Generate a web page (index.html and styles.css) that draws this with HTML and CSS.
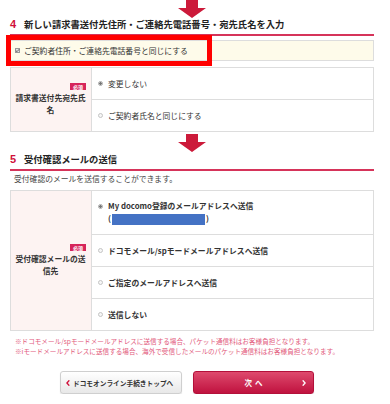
FILE: index.html
```html
<!DOCTYPE html>
<html lang="ja">
<head>
<meta charset="utf-8">
<title>お手続き</title>
<link rel="stylesheet" href="styles.css">
</head>
<body>
<div class="page">
  <div class="arrow"><svg width="28" height="18" viewBox="0 0 28 18"><path d="M8 0h12v8h8L14 18 0 8h8z" fill="#cc1a3a"/></svg></div>
  <h2 class="step"><span class="num">4</span>新しい請求書送付先住所・ご連絡先電話番号・宛先氏名を入力</h2>
  <div class="same-box">
    <span class="check"><svg width="5" height="5" viewBox="0 0 5 5"><path d="M0.8 2.5 2 3.7 4.2 1.2" fill="none" stroke="#555" stroke-width="0.9"/></svg></span>ご契約者住所・ご連絡先電話番号と同じにする
    <span class="highlight"></span>
  </div>
  <div class="form-table">
    <div class="label-cell"><span class="badge">必須</span><span class="label">請求書送付先宛先氏名</span></div>
    <div class="options">
      <div class="opt"><span class="radio on"></span><span>変更しない</span></div>
      <div class="opt"><span class="radio"></span><span>ご契約者氏名と同じにする</span></div>
    </div>
  </div>

  <div class="arrow arrow-2"><svg width="28" height="18" viewBox="0 0 28 18"><path d="M8 0h12v8h8L14 18 0 8h8z" fill="#cc1a3a"/></svg></div>
  <h2 class="step step-5"><span class="num">5</span>受付確認メールの送信</h2>
  <p class="desc">受付確認のメールを送信することができます。</p>
  <div class="form-table table-2">
    <div class="label-cell"><span class="badge">必須</span><span class="label">受付確認メールの送信先</span></div>
    <div class="options bold">
      <div class="opt opt-tall"><span class="radio on"></span><div class="opt-body"><div>My docomo登録のメールアドレスへ送信</div><div>(<span class="mask"></span>)</div></div></div>
      <div class="opt"><span class="radio"></span><span>ドコモメール/spモードメールアドレスへ送信</span></div>
      <div class="opt"><span class="radio"></span><span>ご指定のメールアドレスへ送信</span></div>
      <div class="opt"><span class="radio"></span><span>送信しない</span></div>
    </div>
  </div>
  <div class="notes">
    <p>※ドコモメール/spモードメールアドレスに送信する場合、パケット通信料はお客様負担となります。</p>
    <p>※iモードメールアドレスに送信する場合、海外で受信したメールのパケット通信料はお客様負担となります。</p>
  </div>
  <div class="btns">
    <a class="btn btn-back"><svg class="chev" width="4" height="6" viewBox="0 0 4 6"><path d="M3.3 0.4 0.9 3l2.4 2.6" fill="none" stroke="#d0103a" stroke-width="1.4"/></svg>ドコモオンライン手続きトップへ</a>
    <a class="btn btn-next"><span></span><span class="next-text">次へ</span><svg class="chev-r" width="4" height="6" viewBox="0 0 4 6"><path d="M0.7 0.4 3.1 3 0.7 5.6" fill="none" stroke="#fff" stroke-width="1.4"/></svg></a>
  </div>
</div>
</body>
</html>
```
FILE: styles.css
```css
* { box-sizing: border-box; }
html, body { margin: 0; background: #fff; }
body {
  font-family: "Noto Sans CJK JP", "Noto Sans", sans-serif;
  color: #333;
  overflow: hidden;
}
p { margin: 0; }
.page {
  width: 390px;
  padding: 0 16px 0 10px;
}
.arrow {
  display: flex;
  justify-content: center;
  height: 18px;
}
.arrow svg { display: block; }
.arrow-2 { margin-top: 2px; }
.step {
  margin: 0;
  display: flex;
  align-items: center;
  font-size: 9.3px;
  font-weight: bold;
  line-height: 12px;
  padding-bottom: 4px;
  border-bottom: 2px solid #d6345a;
  color: #222;
}
.step-5 { margin-top: 1px; }
.num {
  width: 14px;
  color: #d0103a;
  font-family: "Liberation Sans", Arial, sans-serif;
  font-size: 11px;
}
.same-box {
  position: relative;
  margin-top: 4px;
  height: 21px;
  border: 1px solid #ddd;
  background: #fefbea;
  display: flex;
  align-items: center;
  padding-left: 4px;
  font-size: 7.8px;
}
.check {
  width: 5px;
  height: 5px;
  border: 1px solid #999;
  background: #e4e4e4;
  margin-right: 4px;
  flex: none;
  display: flex;
  align-items: center;
  justify-content: center;
}
.check svg { display: block; flex: none; }
.highlight {
  position: absolute;
  left: -5px;
  top: -6px;
  width: 206px;
  height: 31px;
  border: 5px solid #ff0000;
}
.form-table {
  margin-top: 6px;
  display: flex;
  border: 1px solid #ddd;
}
.label-cell {
  width: 81px;
  flex: none;
  background: #fdf3f2;
  border-right: 1px solid #ddd;
  display: flex;
  flex-direction: column;
  justify-content: center;
  padding: 0 4px 0 3px;
}
.badge {
  align-self: flex-end;
  background: #d6245a;
  color: #fff;
  font-size: 5px;
  line-height: 7px;
  padding: 0 3px;
  margin-bottom: 2px;
  margin-right: 1px;
  font-weight: bold;
}
.label {
  font-size: 7.8px;
  font-weight: bold;
  text-align: center;
  line-height: 12px;
}
.options { flex: 1; }
.options.bold { font-weight: bold; }
.opt {
  height: 31px;
  display: flex;
  align-items: center;
  padding-left: 6px;
  font-size: 7.8px;
}
.opt + .opt {
  height: 32px;
  border-top: 1px solid #ddd;
}
.opt-tall { height: 43px; }
.opt-tall .radio { align-self: flex-start; margin-top: 13px; }
.opt-body { line-height: 12px; }
.radio {
  width: 5px;
  height: 5px;
  border-radius: 50%;
  border: 1px solid #c4c4c4;
  background: #f6f6f6;
  margin-right: 5px;
  flex: none;
}
.radio.on {
  border-color: #aaa;
  background: radial-gradient(circle, #777 0 1.1px, #e6e6e6 1.5px);
}
.mask {
  display: inline-block;
  width: 93px;
  height: 11px;
  background: #4472c4;
  vertical-align: middle;
  margin: 0 1px;
}
.desc {
  margin-top: 3px;
  padding-left: 4px;
  font-size: 7.8px;
  line-height: 10px;
  color: #444;
}
.table-2 { margin-top: 6px; }
.notes {
  margin-top: 5px;
  padding-left: 5px;
  font-size: 6.6px;
  line-height: 10px;
  color: #e25a7c;
}
.btns {
  margin-top: 15px;
  display: flex;
  gap: 11px;
  padding-left: 50px;
}
.btn {
  height: 23px;
  border-radius: 3px;
  display: flex;
  align-items: center;
  font-weight: bold;
}
.btn-back {
  width: 122px;
  border: 1px solid #cfcfcf;
  background: linear-gradient(#ffffff, #e8e8e8);
  box-shadow: 0 1px 1px rgba(0,0,0,0.12);
  padding-left: 5px;
  font-size: 6.7px;
  color: #333;
}
.chev { margin-right: 3px; flex: none; }
.btn-next {
  width: 121px;
  border: 1px solid #b3103a;
  background: linear-gradient(#de4a6d, #c0123f);
  box-shadow: 0 1px 1px rgba(0,0,0,0.15);
  color: #fff;
  display: grid;
  grid-template-columns: 1fr auto 1fr;
  align-items: center;
  padding: 0 7px;
}
.next-text {
  font-size: 7.5px;
  letter-spacing: 3px;
  margin-right: -3px;
}
.chev-r { justify-self: end; }
```
